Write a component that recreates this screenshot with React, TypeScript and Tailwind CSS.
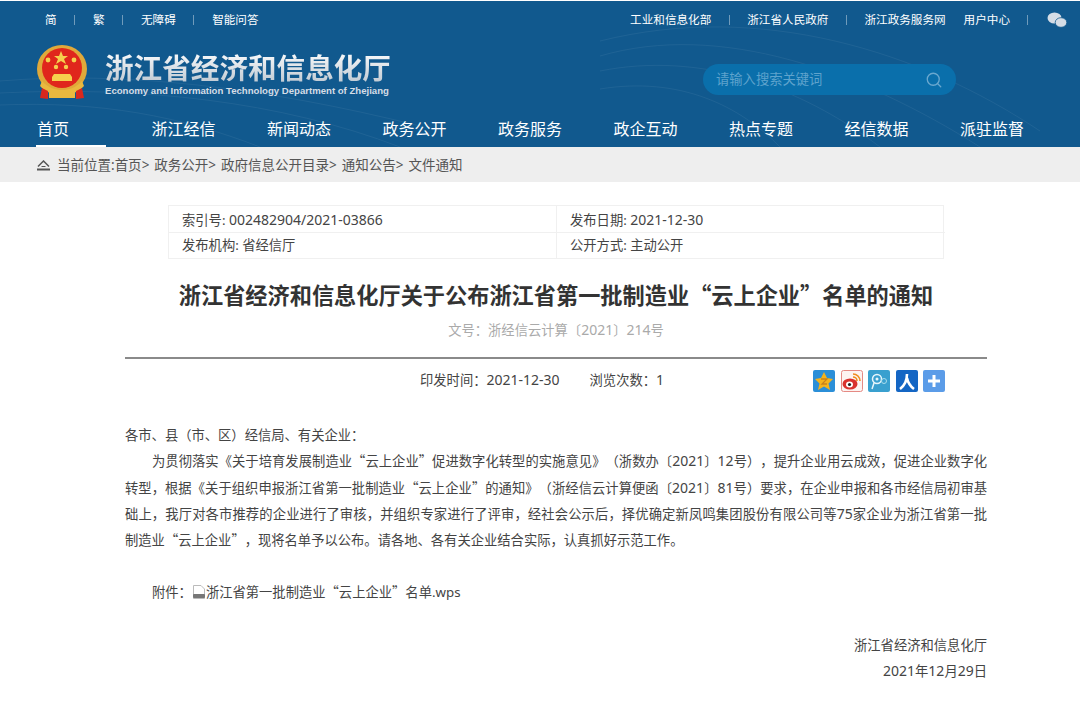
import { Search } from 'lucide-react';

const topLeft = ['简', '繁', '无障碍', '智能问答'];
const navLinks = ['首页', '浙江经信', '新闻动态', '政务公开', '政务服务', '政企互动', '热点专题', '经信数据', '派驻监督'];
const crumbs = ['首页', '政务公开', '政府信息公开目录', '通知公告'];

function Emblem() {
  return (
    <svg width="52" height="56" viewBox="0 0 52 56" className="shrink-0">
      <ellipse cx="26" cy="24" rx="25" ry="24" fill="#e0a93a" />
      <ellipse cx="26" cy="23" rx="20" ry="20" fill="#e0261c" />
      <polygon points="25,6 27,11 32,11 28,14 30,19 25,16 20,19 22,14 18,11 23,11" fill="#f6d04d" />
      <circle cx="12" cy="15" r="2.4" fill="#f6d04d" />
      <circle cx="38" cy="15" r="2.4" fill="#f6d04d" />
      <circle cx="20" cy="22" r="2.2" fill="#f6d04d" />
      <circle cx="30" cy="22" r="2.2" fill="#f6d04d" />
      <path d="M18 29h16l2 3v4H16v-4z" fill="#f6d04d" />
      <path d="M6 36c6 7 14 9 20 9s14-2 20-9l2 5c-5 6-13 9-22 9S9 47 4 41z" fill="#e9b93f" />
      <path d="M6 43l6 3v8l-8-1zM46 43l-6 3v8l8-1z" fill="#d9281e" />
      <rect x="13" y="47" width="26" height="6" fill="#e9b93f" />
    </svg>
  );
}

function HeaderLines() {
  return (
    <svg className="absolute inset-0 h-full w-full" viewBox="0 0 1080 146" preserveAspectRatio="none" fill="none" stroke="#ffffff" strokeOpacity="0.06">
      <path d="M0 80C120 70 260 85 420 125" />
      <path d="M0 92C140 85 280 100 400 146" />
      <path d="M0 104C100 100 180 115 260 146" />
      <path d="M600 55C720 20 860 70 980 146" />
      <path d="M600 70C700 50 800 85 880 146" />
      <path d="M600 40C760 0 920 50 1040 130" />
      <path d="M600 88C680 75 740 105 780 146" />
    </svg>
  );
}

function ShareIcons() {
  return (
    <div className="flex gap-[5.5px]">
      <svg width="22" height="22" viewBox="0 0 22 22">
        <rect width="22" height="22" rx="2" fill="#2b8fd8" />
        <polygon points="11,2 14,8 20,9 15.5,13.5 17,20 11,16.5 5,20 6.5,13.5 2,9 8,8" fill="#f5b31c" />
        <path d="M8 9h6l-5 5h5" fill="none" stroke="#c9821a" strokeWidth="1.3" />
      </svg>
      <svg width="22" height="22" viewBox="0 0 22 22">
        <rect x="0.5" y="0.5" width="21" height="21" rx="2" fill="#fdf3f1" stroke="#e58a84" />
        <ellipse cx="9" cy="14" rx="7.5" ry="5.5" fill="#d9322e" />
        <ellipse cx="8.5" cy="14.5" rx="3.5" ry="3" fill="#fff" />
        <circle cx="8.5" cy="14.5" r="1.6" fill="#222" />
        <path d="M12 4a7 7 0 0 1 7 7M12 7a4 4 0 0 1 4 4" fill="none" stroke="#f08c1e" strokeWidth="1.6" />
      </svg>
      <svg width="22" height="22" viewBox="0 0 22 22">
        <rect width="22" height="22" rx="2" fill="#39a0cf" />
        <circle cx="9" cy="9" r="4.5" fill="none" stroke="#e6f6fb" strokeWidth="1.5" />
        <circle cx="9" cy="9" r="1.5" fill="#e6f6fb" />
        <path d="M6 13l-2 6" stroke="#e6f6fb" strokeWidth="1.5" />
        <circle cx="16" cy="11" r="2.5" fill="none" stroke="#a9dcec" strokeWidth="1" />
      </svg>
      <svg width="22" height="22" viewBox="0 0 22 22">
        <rect width="22" height="22" rx="2" fill="#1466c4" />
        <path d="M11 4C11 11 8 16 4 19M11 8c1 5 3 8 7 11" fill="none" stroke="#fff" strokeWidth="2.6" />
      </svg>
      <svg width="22" height="22" viewBox="0 0 22 22">
        <rect width="22" height="22" rx="2" fill="#5b9ce8" />
        <path d="M11 5v12M5 11h12" stroke="#fff" strokeWidth="3" />
      </svg>
    </div>
  );
}

// digits in the reference run a bit wider than the CJK size
function N({ children }: { children: string }) {
  return <span className="text-[14px]">{children}</span>;
}

// full-width curly quotes come from the CJK family
function Q({ children }: { children: string }) {
  return <span className="font-['Noto_Sans_CJK_SC',sans-serif]">{children}</span>;
}

export default function App() {
  return (
    <div lang="zh-CN" className="h-[701px] overflow-hidden bg-white font-['Noto_Sans','Noto_Sans_CJK_SC',sans-serif] text-[13.3px] text-[#444] [text-spacing-trim:space-all]">
      <header className="relative mt-px h-[146px] bg-[#11598e] text-white">
        <HeaderLines />
        <div className="relative flex h-[38px] items-center justify-between pl-[45px] pr-[13px] text-[11.6px]">
          <div className="flex items-center">
            {topLeft.map((item, i) => (
              <div key={item} className="flex items-center">
                {i > 0 && <span className="mx-[17.7px] h-[10px] w-px bg-white/40" />}
                <span>{item}</span>
              </div>
            ))}
          </div>
          <div className="flex items-center">
            <span>工业和信息化部</span>
            <span className="mx-[17.5px] h-[10px] w-px bg-white/40" />
            <span>浙江省人民政府</span>
            <span className="mx-[17.5px] h-[10px] w-px bg-white/40" />
            <span className="mr-[18px]">浙江政务服务网</span>
            <span>用户中心</span>
            <span className="ml-[17px] mr-[19px] h-[10px] w-px bg-white/40" />
            <svg width="20" height="16" viewBox="0 0 20 16" fill="#d5dde6">
              <ellipse cx="7.5" cy="6" rx="7" ry="5.6" />
              <ellipse cx="14" cy="10.5" rx="5.8" ry="4.8" stroke="#11598e" strokeWidth="0.8" />
            </svg>
          </div>
        </div>
        <div className="relative flex h-[69px] items-start justify-between pl-[36px] pr-[124px]">
          <div className="mt-[6px] flex items-center gap-[17px]">
            <Emblem />
            <div>
              <div className="bg-gradient-to-b from-white to-[#b9c4ce] bg-clip-text text-[28.6px] font-bold leading-[36px] text-transparent">浙江省经济和信息化厅</div>
              <div className="-mt-px whitespace-nowrap font-['Liberation_Sans',sans-serif] text-[9.6px] font-bold leading-[11px] text-[#d5dde6]">Economy and Information Technology Department of Zhejiang</div>
            </div>
          </div>
          <div className="mt-[25px] flex h-[31px] w-[253px] items-center justify-between rounded-full bg-[#0a6fab] px-[13px] text-[#5fa3cd]">
            <span>请输入搜索关键词</span>
            <Search className="h-[18px] w-[18px] text-[#6aa8cf]" strokeWidth={1.75} />
          </div>
        </div>
        <nav className="relative flex h-[39px] pl-[36px] text-[16px]">
          {navLinks.map((link, i) => (
            <div key={link} className="w-[115.5px] shrink-0 pt-[9px]">
              <div className={i === 0 ? 'h-[30px] w-[70px] border-b-2 border-white pl-px leading-[24px]' : 'leading-[24px]'}>{link}</div>
            </div>
          ))}
        </nav>
      </header>

      <div className="flex h-[35px] items-center bg-[#eeeeee] pb-px pl-[37px] pt-[3px] text-[13.5px] text-[#555]">
        <svg width="13" height="11" viewBox="0 0 13 11" fill="none" stroke="#555" className="mr-[7px]">
          <path d="M1 6.5L6.5 1L12 6.5" strokeWidth="1.5" />
          <path d="M0 9.5h13" strokeWidth="2" />
          <path d="M4.5 6.5h4" />
        </svg>
        <span>当前位置:</span>
        {crumbs.map(c => (
          <span key={c} className="mr-[5px]">{c}&gt;</span>
        ))}
        <span>文件通知</span>
      </div>

      <main className="pl-[125px] pr-[93px]">
        <div className="ml-[43px] mt-[23px] grid h-[54px] w-[776px] grid-cols-[388px_388px] grid-rows-[27px_25px] border border-[#f0f0f0]">
          <div className="border-b border-r border-[#f0f0f0] pl-[13px] leading-[27px]">索引号: <N>002482904/2021-03866</N></div>
          <div className="border-b border-[#f0f0f0] pl-[13px] leading-[27px]">发布日期: <N>2021-12-30</N></div>
          <div className="border-r border-[#f0f0f0] pl-[13px] leading-[25px]">发布机构: 省经信厅</div>
          <div className="pl-[13px] leading-[25px]">公开方式: 主动公开</div>
        </div>
        <h1 className="mt-[18px] text-center text-[22.2px] font-bold leading-[34px] text-[#333]">浙江省经济和信息化厅关于公布浙江省第一批制造业<Q>“</Q>云上企业<Q>”</Q>名单的通知</h1>
        <div className="mt-[7px] text-center leading-[20px] text-[#aaaaaa]">文号&#xFF1A;浙经信云计算〔<N>2021</N>〕<N>214</N>号</div>
        <div className="mt-[17px] flex h-[48px] items-start border-t-2 border-[#8a8a8a] pt-[10px]">
          <span className="ml-[295px] leading-[22px]">印发时间&#xFF1A;<N>2021-12-30</N></span>
          <span className="ml-[30px] leading-[22px]">浏览次数&#xFF1A;<N>1</N></span>
          <div className="ml-auto mr-[42px] mt-px">
            <ShareIcons />
          </div>
        </div>
        <div className="mt-[17px] text-justify leading-[26.25px]">
          <p>各市、县&#xFF08;市、区&#xFF09;经信局、有关企业&#xFF1A;</p>
          <p className="indent-[27px]">为贯彻落实《关于培育发展制造业<Q>“</Q>云上企业<Q>”</Q>促进数字化转型的实施意见》&#xFF08;浙数办〔<N>2021</N>〕<N>12</N>号&#xFF09;&#xFF0C;提升企业用云成效&#xFF0C;促进企业数字化转型&#xFF0C;根据《关于组织申报浙江省第一批制造业<Q>“</Q>云上企业<Q>”</Q>的通知》&#xFF08;浙经信云计算便函〔<N>2021</N>〕<N>81</N>号&#xFF09;要求&#xFF0C;在企业申报和各市经信局初审基础上&#xFF0C;我厅对各市推荐的企业进行了审核&#xFF0C;并组织专家进行了评审&#xFF0C;经社会公示后&#xFF0C;择优确定新凤鸣集团股份有限公司等<N>75</N>家企业为浙江省第一批制造业<Q>“</Q>云上企业<Q>”</Q>&#xFF0C;现将名单予以公布。请各地、各有关企业结合实际&#xFF0C;认真抓好示范工作。</p>
          <p className="mt-[26px] flex items-center pl-[27px]">
            <span>附件&#xFF1A;</span>
            <svg width="14" height="14" viewBox="0 0 14 14">
              <path d="M1.5 .5H9L12.5 4V13.5H1.5z" fill="#fff" stroke="#bbb" />
              <rect x="1" y="9" width="12" height="4" rx="1" fill="#777" />
            </svg>
            <span>浙江省第一批制造业<Q>“</Q>云上企业<Q>”</Q>名单.wps</span>
          </p>
          <p className="mt-[26px] text-right">浙江省经济和信息化厅</p>
          <p className="text-right"><N>2021</N>年<N>12</N>月<N>29</N>日</p>
        </div>
      </main>
    </div>
  );
}
